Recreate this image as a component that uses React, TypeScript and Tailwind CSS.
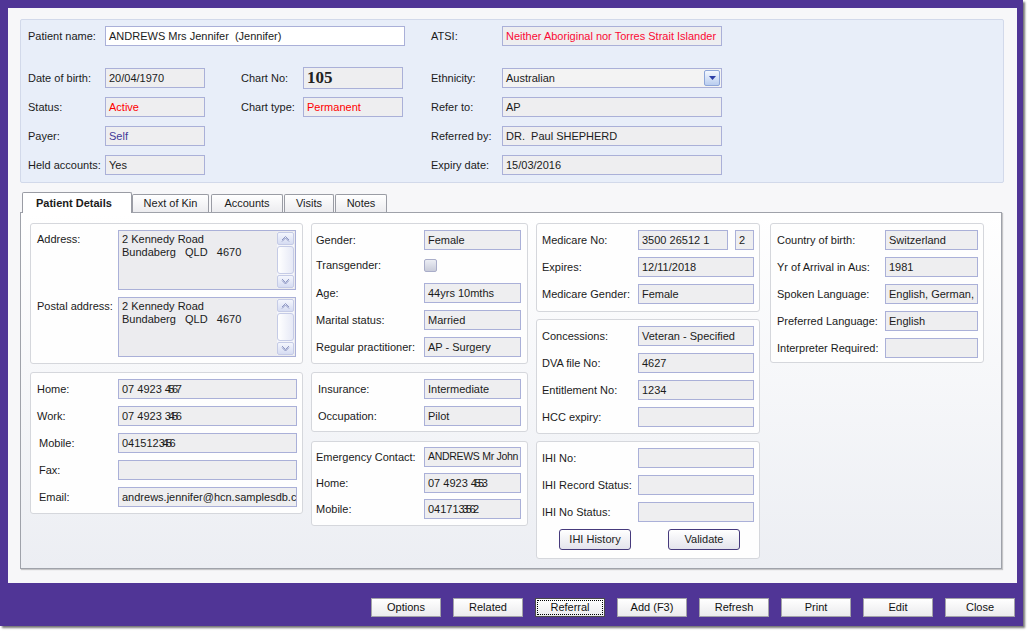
import React from "react";

type FieldProps = {
  className?: string;
  children?: React.ReactNode;
  white?: boolean;
};

function Field({ className = "", children, white }: FieldProps) {
  return (
    <div
      className={`h-[20px] shrink-0 border border-[#aab0d8] ${
        white ? "bg-white" : "bg-[#eeeef0]"
      } px-[3px] flex items-center whitespace-pre overflow-hidden ${className}`}
    >
      {children}
    </div>
  );
}

type RowProps = {
  label: string;
  lw: string;
  className?: string;
  labelClass?: string;
  children?: React.ReactNode;
};

function Row({ label, lw, className = "", labelClass = "", children }: RowProps) {
  return (
    <div className={`flex items-center h-[20px] ${className}`}>
      <span className={`shrink-0 whitespace-nowrap ${lw} ${labelClass}`}>{label}</span>
      {children}
    </div>
  );
}

function GroupBox({ className = "", children }: { className?: string; children?: React.ReactNode }) {
  return (
    <div className={`border border-[#d5d7dc] rounded-[3px] bg-[#fefefe] flex flex-col ${className}`}>
      {children}
    </div>
  );
}

function Chevron({ up }: { up?: boolean }) {
  return (
    <svg width="9" height="7" viewBox="0 0 9 7">
      <path
        d={up ? "M1 5 L4.5 1.5 L8 5 M1 6.5 L4.5 3 L8 6.5" : "M1 1 L4.5 4.5 L8 1 M1 2.5 L4.5 6 L8 2.5"}
        fill="none"
        stroke="#8f98c4"
        strokeWidth="1"
      />
    </svg>
  );
}

function AddressBox() {
  return (
    <div className="relative w-[178px] h-[60px] border border-[#aab0d8] bg-[#ececef] pl-[3px] pt-[2px] leading-[13px] whitespace-pre">
      <div>2 Kennedy Road</div>
      <div>{"Bundaberg   QLD   4670"}</div>
      <div className="absolute right-[1px] top-[1px] bottom-[1px] w-[17px] flex flex-col bg-[#f4f5fa]">
        <div className="h-[13px] rounded-[2px] border border-[#c5cbe6] bg-gradient-to-b from-[#f4f6fd] to-[#d6dcf2] flex items-center justify-center">
          <Chevron up />
        </div>
        <div className="flex-1 my-[1px] rounded-[3px] border border-[#c5cbe6] bg-gradient-to-r from-white to-[#e6e9f6]" />
        <div className="h-[13px] rounded-[2px] border border-[#c5cbe6] bg-gradient-to-b from-[#f4f6fd] to-[#d6dcf2] flex items-center justify-center">
          <Chevron />
        </div>
      </div>
    </div>
  );
}

function Masked({ a, b }: { a: string; b: string }) {
  return (
    <span>
      {a}
      <span className="tracking-[-2.5px]">{b}</span>
    </span>
  );
}

const tabs = [
  { t: "Next of Kin", c: "w-[77px] ml-0" },
  { t: "Accounts", c: "w-[72px] ml-[2px]" },
  { t: "Visits", c: "w-[50px] ml-[1px]" },
  { t: "Notes", c: "w-[52px] ml-[1px]" },
];
const buttons = ["Options", "Related", "Referral", "Add (F3)", "Refresh", "Print", "Edit", "Close"];

export default function App() {
  return (
    <div className="w-[1031px] h-[634px] bg-white font-['Liberation_Sans',Arial,sans-serif] text-[11px] text-[#1b1b1b] overflow-hidden">
      <div className="w-[1023px] h-[626px] bg-[#503596] pt-[8px] pl-[8px] shadow-[2px_2px_2px_rgba(0,0,0,0.55)] flex flex-col">
        {/* main panel */}
        <div className="w-[1009px] h-[575px] bg-[#f7f7f9] flex flex-col">
          {/* header */}
          <div className="ml-[12px] mt-[11px] w-[984px] h-[164px] border border-[#d2d9ea] bg-[#e8eef9] rounded-[2px] pl-[7px] pt-[6px] flex flex-col">
            <div className="flex items-center h-[20px]">
              <span className="w-[77px] shrink-0">Patient name:</span>
              <Field white className="w-[300px]">
                {"ANDREWS Mrs Jennifer  (Jennifer)"}
              </Field>
              <span className="ml-[26px] w-[71px] shrink-0">ATSI:</span>
              <Field className="w-[220px] text-[#fb0a34]">Neither Aboriginal nor Torres Strait Islander</Field>
            </div>

            <div className="flex items-center h-[20px] mt-[22px]">
              <span className="w-[77px] shrink-0">Date of birth:</span>
              <Field className="w-[100px]">20/04/1970</Field>
              <span className="ml-[36px] w-[62px] shrink-0">Chart No:</span>
              <Field className="w-[100px] h-[22px] font-['Liberation_Serif',serif] font-bold text-[17px] text-[#222]">105</Field>
              <span className="ml-[28px] w-[71px] shrink-0">Ethnicity:</span>
              <Field className="w-[220px] bg-[#f3f3f3] justify-between pr-[1px]">
                <span>Australian</span>
                <span className="w-[16px] h-[16px] rounded-[2px] border border-[#8ea6d8] bg-gradient-to-b from-[#f4f8fe] to-[#b9cdef] flex items-center justify-center">
                  <svg width="7" height="4" viewBox="0 0 7 4">
                    <path d="M0 0 H7 L3.5 4 Z" fill="#2d3fa6" />
                  </svg>
                </span>
              </Field>
            </div>

            <div className="flex items-center h-[20px] mt-[9px]">
              <span className="w-[77px] shrink-0">Status:</span>
              <Field className="w-[100px] text-[#ff0000]">Active</Field>
              <span className="ml-[36px] w-[62px] shrink-0">Chart type:</span>
              <Field className="w-[100px] text-[#ff0000]">Permanent</Field>
              <span className="ml-[28px] w-[71px] shrink-0">Refer to:</span>
              <Field className="w-[220px]">AP</Field>
            </div>

            <div className="flex items-center h-[20px] mt-[9px]">
              <span className="w-[77px] shrink-0">Payer:</span>
              <Field className="w-[100px] text-[#3f3a98]">Self</Field>
              <div className="w-[226px] shrink-0" />
              <span className="w-[71px] shrink-0">Referred by:</span>
              <Field className="w-[220px]">{"DR.  Paul SHEPHERD"}</Field>
            </div>

            <div className="flex items-center h-[20px] mt-[9px]">
              <span className="w-[77px] shrink-0">Held accounts:</span>
              <Field className="w-[100px]">Yes</Field>
              <div className="w-[226px] shrink-0" />
              <span className="w-[71px] shrink-0">Expiry date:</span>
              <Field className="w-[220px]">15/03/2016</Field>
            </div>
          </div>

          {/* tabs */}
          <div className="ml-[14px] mt-[9px] flex items-end h-[20px] relative z-10">
            <div className="w-[110px] h-[21px] -mb-px border border-b-0 border-[#9a9ca4] rounded-t-[2px] bg-white font-bold pl-[13px] pt-[2px]">
              Patient Details
            </div>
            {tabs.map(({ t, c }) => (
              <div
                key={t}
                className={`${c} h-[18px] border border-b-0 border-[#9a9ca4] rounded-t-[2px] bg-gradient-to-b from-white to-[#ececef] flex items-center justify-center`}
              >
                {t}
              </div>
            ))}
          </div>

          <div className="ml-[12px] w-[982px] h-[357px] border border-[#9fa2aa] bg-gradient-to-b from-white to-[#eceef3] shadow-[1px_1px_1px_rgba(0,0,0,0.2)] pt-[10px] pl-[9px] flex items-start">
            {/* col 1 */}
            <div className="w-[273px] flex flex-col">
              <GroupBox className="pl-[6px] pt-[6px] pb-[6px]">
                <div className="flex items-start">
                  <span className="w-[81px] shrink-0 pt-[1px]">Address:</span>
                  <AddressBox />
                </div>
                <div className="flex items-start mt-[7px]">
                  <span className="w-[81px] shrink-0 pt-[1px]">Postal address:</span>
                  <AddressBox />
                </div>
              </GroupBox>
              <GroupBox className="mt-[8px] pl-[6px] pt-[6px] pb-[6px] gap-[7px]">
                <Row label="Home:" lw="w-[81px]">
                  <Field className="w-[179px]"><Masked a="07 4923 " b="4567" /></Field>
                </Row>
                <Row label="Work:" lw="w-[81px]">
                  <Field className="w-[179px]"><Masked a="07 4923 " b="3456" /></Field>
                </Row>
                <Row label="Mobile:" lw="w-[81px]" labelClass="pl-[2px]">
                  <Field className="w-[179px]"><Masked a="041512" b="3456" /></Field>
                </Row>
                <Row label="Fax:" lw="w-[81px]" labelClass="pl-[2px]">
                  <Field className="w-[179px]" />
                </Row>
                <Row label="Email:" lw="w-[81px]" labelClass="pl-[2px]">
                  <Field className="w-[179px]">andrews.jennifer@hcn.samplesdb.com</Field>
                </Row>
              </GroupBox>
            </div>

            {/* col 2 */}
            <div className="w-[217px] ml-[8px] flex flex-col">
              <GroupBox className="pl-[4px] pt-[6px] pb-[6px]">
                <Row label="Gender:" lw="w-[108px]">
                  <Field className="w-[97px]">Female</Field>
                </Row>
                <Row label="Transgender:" lw="w-[108px]" className="mt-[5px]">
                  <span className="w-[13px] h-[13px] border border-[#a9adc9] rounded-[2px] bg-gradient-to-b from-[#eceef4] to-[#c9ccda]" />
                </Row>
                <Row label="Age:" lw="w-[108px]" className="mt-[8px]">
                  <Field className="w-[97px]">44yrs 10mths</Field>
                </Row>
                <Row label="Marital status:" lw="w-[108px]" className="mt-[7px]">
                  <Field className="w-[97px]">Married</Field>
                </Row>
                <Row label="Regular practitioner:" lw="w-[108px]" className="mt-[7px]">
                  <Field className="w-[97px]">AP - Surgery</Field>
                </Row>
              </GroupBox>
              <GroupBox className="mt-[8px] pl-[4px] pt-[6px] pb-[5px] gap-[7px]">
                <Row label="Insurance:" lw="w-[108px]" labelClass="pl-[2px]">
                  <Field className="w-[97px]">Intermediate</Field>
                </Row>
                <Row label="Occupation:" lw="w-[108px]" labelClass="pl-[2px]">
                  <Field className="w-[97px]">Pilot</Field>
                </Row>
              </GroupBox>
              <GroupBox className="mt-[9px] pl-[4px] pt-[5px] pb-[6px] gap-[6px]">
                <Row label="Emergency Contact:" lw="w-[108px]">
                  <Field className="w-[97px] px-[2px] text-[10.5px] tracking-[-0.3px]">ANDREWS Mr John</Field>
                </Row>
                <Row label="Home:" lw="w-[108px]">
                  <Field className="w-[97px]"><Masked a="07 4923 " b="4553" /></Field>
                </Row>
                <Row label="Mobile:" lw="w-[108px]">
                  <Field className="w-[97px]"><Masked a="04171" b="33562" /></Field>
                </Row>
              </GroupBox>
            </div>

            {/* col 3 */}
            <div className="w-[224px] ml-[8px] flex flex-col">
              <GroupBox className="pl-[5px] pt-[6px] pb-[7px] gap-[7px]">
                <Row label="Medicare No:" lw="w-[96px]">
                  <Field className="w-[90px]">3500 26512 1</Field>
                  <Field className="w-[19px] ml-[7px]">2</Field>
                </Row>
                <Row label="Expires:" lw="w-[96px]">
                  <Field className="w-[116px]">12/11/2018</Field>
                </Row>
                <Row label="Medicare Gender:" lw="w-[96px]">
                  <Field className="w-[116px]">Female</Field>
                </Row>
              </GroupBox>
              <GroupBox className="mt-[7px] pl-[5px] pt-[6px] pb-[6px] gap-[7px]">
                <Row label="Concessions:" lw="w-[96px]">
                  <Field className="w-[116px]">Veteran - Specified</Field>
                </Row>
                <Row label="DVA file No:" lw="w-[96px]">
                  <Field className="w-[116px]">4627</Field>
                </Row>
                <Row label="Entitlement No:" lw="w-[96px]">
                  <Field className="w-[116px]">1234</Field>
                </Row>
                <Row label="HCC expiry:" lw="w-[96px]">
                  <Field className="w-[116px]" />
                </Row>
              </GroupBox>
              <GroupBox className="mt-[7px] pl-[5px] pt-[6px] pb-[8px] gap-[7px]">
                <Row label="IHI No:" lw="w-[96px]">
                  <Field className="w-[116px]" />
                </Row>
                <Row label="IHI Record Status:" lw="w-[96px]">
                  <Field className="w-[116px]" />
                </Row>
                <Row label="IHI No Status:" lw="w-[96px]">
                  <Field className="w-[116px]" />
                </Row>
                <div className="flex pl-[17px] gap-[37px]">
                  <button className="w-[72px] h-[21px] border border-[#463a7c] rounded-[3px] bg-gradient-to-b from-white to-[#e4e4ec] text-[11px]">
                    IHI History
                  </button>
                  <button className="w-[72px] h-[21px] border border-[#463a7c] rounded-[3px] bg-gradient-to-b from-white to-[#e4e4ec] text-[11px]">
                    Validate
                  </button>
                </div>
              </GroupBox>
            </div>

            {/* col 4 */}
            <div className="w-[214px] ml-[10px] flex flex-col">
              <GroupBox className="pl-[6px] pt-[6px] pb-[4px] gap-[7px]">
                <Row label="Country of birth:" lw="w-[108px]">
                  <Field className="w-[93px]">Switzerland</Field>
                </Row>
                <Row label="Yr of Arrival in Aus:" lw="w-[108px]">
                  <Field className="w-[93px]">1981</Field>
                </Row>
                <Row label="Spoken Language:" lw="w-[108px]">
                  <Field className="w-[93px]">English, German, Swiss</Field>
                </Row>
                <Row label="Preferred Language:" lw="w-[108px]">
                  <Field className="w-[93px]">English</Field>
                </Row>
                <Row label="Interpreter Required:" lw="w-[108px]">
                  <Field className="w-[93px]" />
                </Row>
              </GroupBox>
            </div>
          </div>
        </div>

        {/* bottom buttons */}
        <div className="flex items-center gap-[12px] pl-[363px] mt-[15px]">
          {buttons.map((b) => (
            <button
              key={b}
              className={`w-[70px] h-[19px] border ${
                b === "Referral" ? "border-[#4a4a4a]" : "border-[#a3a3a8]"
              } bg-gradient-to-b from-white to-[#ebebed] text-[11px] text-[#111] flex items-center justify-center p-[1px]`}
            >
              <span
                className={`w-full h-full flex items-center justify-center ${
                  b === "Referral" ? "border border-dotted border-black" : ""
                }`}
              >
                {b}
              </span>
            </button>
          ))}
        </div>
      </div>
    </div>
  );
}
